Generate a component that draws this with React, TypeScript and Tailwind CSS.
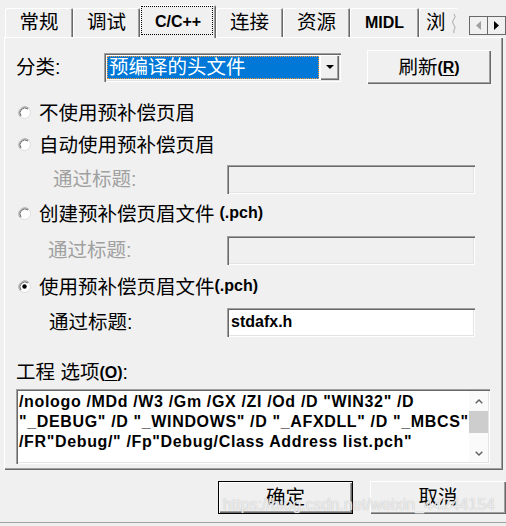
import React from "react"

const raised = "shadow-[inset_1px_1px_#ffffff,inset_-1px_-1px_#696969,inset_-2px_-2px_#a0a0a0]"
const sunken = "shadow-[inset_1px_1px_#a0a0a0,inset_2px_2px_#696969,inset_-1px_-1px_#ffffff,inset_-2px_-2px_#e3e3e3]"
const latin = "font-['Liberation_Sans',sans-serif] font-bold text-[16px]"

function Radio({ checked }: { checked?: boolean }) {
  return (
    <svg width="13" height="13" viewBox="0 0 13 13" className="ml-[2px] shrink-0">
      <circle cx="6.5" cy="6.5" r="6" fill="#ffffff" stroke="#dcdcdc" />
      <path d="M2.3 10.7 A6 6 0 0 1 10.7 2.3" fill="none" stroke="#a0a0a0" strokeWidth="1" />
      <path d="M3 10 A5 5 0 0 1 10 3" fill="none" stroke="#696969" strokeWidth="1" />
      {checked && <circle cx="6.5" cy="6.5" r="2.2" fill="#000000" />}
    </svg>
  )
}

function Tab({ className, children }: { className: string; children: React.ReactNode }) {
  return (
    <div
      className={`flex h-[29px] shrink-0 items-center justify-center rounded-t-[2px] bg-[#f0f0f0] shadow-[inset_1px_1px_#ffffff,inset_-1px_0_#696969,inset_-2px_0_#a0a0a0] ${className}`}
    >
      {children}
    </div>
  )
}

function FieldRow({ label, labelClass, disabled, value }: { label: string; labelClass: string; disabled?: boolean; value?: string }) {
  return (
    <div className="flex h-[30px] items-center">
      <div className={`w-[211px] pt-[2px] ${labelClass} ${disabled ? "text-[#a0a0a0]" : ""}`}>{label}</div>
      <div className={`flex h-[29px] w-[248px] items-center pl-[4px] ${sunken} ${disabled ? "bg-[#f0f0f0]" : "bg-white"}`}>
        {value && <span className={latin}>{value}</span>}
      </div>
    </div>
  )
}

export default function App() {
  return (
    <div className="relative h-[526px] w-[506px] overflow-hidden bg-[#f0f0f0] font-['Liberation_Sans','Noto_Sans_CJK_SC',sans-serif] text-[19.5px] leading-none text-black">
      {/* tab strip */}
      <div className="flex h-[37px] items-end pl-[5px]">
        <div className="flex w-[457px] items-end">
          <Tab className="w-[68px]">常规</Tab>
          <Tab className="w-[67px]">调试</Tab>
          <div className="relative z-10 -mb-px flex h-[33px] w-[76px] shrink-0 items-center justify-center rounded-t-[2px] bg-[#f0f0f0] shadow-[inset_1px_1px_#ffffff,inset_-1px_0_#696969,inset_-2px_0_#a0a0a0]">
            <span className={latin}>C/C++</span>
            <div className="absolute left-[1px] right-[3px] top-[1px] bottom-[3px] border border-dotted border-black" />
          </div>
          <Tab className="w-[67px]">连接</Tab>
          <Tab className="w-[67px]">资源</Tab>
          <Tab className="w-[69px]">
            <span className={latin}>MIDL</span>
          </Tab>
          <div className="flex h-[29px] w-[38px] shrink-0 items-center rounded-tl-[2px] pl-[7px] shadow-[inset_1px_1px_#ffffff]">
            浏
            <svg width="6" height="22" viewBox="0 0 6 22" className="ml-[6px]">
              <path d="M2 1 Q5 4 2 7 Q-1 10 2 13 Q5 16 2 19 L2 22" fill="none" stroke="#a0a0a0" strokeWidth="1" />
            </svg>
          </div>
        </div>
        <div className="mb-[2px] ml-[7px] flex h-[19px] border border-[#696969] bg-[#f0f0f0]">
          <div className="flex w-[18px] items-center justify-center border-r border-[#696969]">
            <svg width="5" height="9" viewBox="0 0 5 9">
              <path d="M5 0 L0 4.5 L5 9 Z" fill="#a0a0a0" />
            </svg>
          </div>
          <div className="flex w-[17px] items-center justify-center">
            <svg width="5" height="9" viewBox="0 0 5 9">
              <path d="M0 0 L5 4.5 L0 9 Z" fill="#000000" />
            </svg>
          </div>
        </div>
      </div>

      {/* page */}
      <div className={`ml-[4px] flex h-[433px] w-[499px] flex-col pl-[12px] pt-[13px] ${raised}`}>
        <div className="flex h-[34px] items-center">
          <div className="w-[88px] pt-[2px]">分类:</div>
          <div className={`flex h-[29px] w-[237px] bg-white p-[2px] ${sunken}`}>
            <div className="m-px flex flex-1 items-center bg-[#0078d7] pl-[2px] pt-[1px] text-white outline-1 outline-dotted outline-offset-[-1px] outline-[#ff9a3c]">
              预编译的头文件
            </div>
            <div className={`flex w-[19px] items-center justify-center bg-[#f0f0f0] ${raised}`}>
              <svg width="8" height="4" viewBox="0 0 8 4">
                <path d="M0 0 L8 0 L4 4 Z" fill="#000000" />
              </svg>
            </div>
          </div>
          <div className={`ml-[26px] flex h-[34px] w-[124px] items-center justify-center bg-[#f0f0f0] pt-[1px] ${raised}`}>
            刷新
            <span className={latin}>
              (<span className="underline underline-offset-2">R</span>)
            </span>
          </div>
        </div>

        <div className="mt-[13px] flex h-[30px] items-center">
          <Radio />
          <span className="ml-[8px] pt-[3px]">不使用预补偿页眉</span>
        </div>
        <div className="mt-[2px] flex h-[30px] items-center">
          <Radio />
          <span className="ml-[8px] pt-[3px]">自动使用预补偿页眉</span>
        </div>
        <div className="mt-[5px]">
          <FieldRow label="通过标题:" labelClass="pl-[37px]" disabled />
        </div>
        <div className="mt-[4px] flex h-[30px] items-center">
          <Radio />
          <span className="ml-[8px] pt-[3px]">创建预补偿页眉文件</span>
          <span className={`ml-[5px] ${latin}`}>(.pch)</span>
        </div>
        <div className="mt-[7px]">
          <FieldRow label="通过标题:" labelClass="pl-[32px]" disabled />
        </div>
        <div className="mt-[6px] flex h-[30px] items-center">
          <Radio checked />
          <span className="ml-[8px] pt-[3px]">使用预补偿页眉文件</span>
          <span className={latin}>(.pch)</span>
        </div>
        <div className="mt-[6px]">
          <FieldRow label="通过标题:" labelClass="pl-[33px]" value="stdafx.h" />
        </div>

        <div className="mt-[20px] flex h-[30px] items-center pt-[2px]">
          工程 选项
          <span className={latin}>
            (<span className="underline underline-offset-2">O</span>)
          </span>
          :
        </div>
        <div className={`mt-[2px] flex h-[75px] w-[474px] bg-white p-[2px] ${sunken}`}>
          <div className={`flex-1 pt-px pl-px leading-[20px] tracking-[0.65px] ${latin}`}>
            <div>/nologo /MDd /W3 /Gm /GX /ZI /Od /D "WIN32" /D</div>
            <div>"_DEBUG" /D "_WINDOWS" /D "_AFXDLL" /D "_MBCS"</div>
            <div>/FR"Debug/" /Fp"Debug/Class Address list.pch"</div>
          </div>
          <div className="flex w-[19px] flex-col bg-[#fafafa]">
            <div className="flex h-[20px] items-center justify-center">
              <svg width="8" height="5" viewBox="0 0 8 5">
                <path d="M0.7 4.3 L4 1 L7.3 4.3" fill="none" stroke="#606060" strokeWidth="1.4" />
              </svg>
            </div>
            <div className="h-[22px] bg-[#cdcdcd]" />
            <div className="flex-1" />
            <div className="flex h-[18px] items-center justify-center">
              <svg width="8" height="5" viewBox="0 0 8 5">
                <path d="M0.7 0.7 L4 4 L7.3 0.7" fill="none" stroke="#606060" strokeWidth="1.4" />
              </svg>
            </div>
          </div>
        </div>
      </div>

      {/* dialog buttons */}
      <div className="mt-[11px] flex gap-[17px] pl-[218px]">
        <div className="flex h-[33px] w-[135px] items-center justify-center border border-black">
          <div className={`flex h-full w-full items-center justify-center bg-[#f0f0f0] pt-[1px] ${raised}`}>确定</div>
        </div>
        <div className={`flex h-[33px] w-[136px] items-center justify-center bg-[#f0f0f0] pt-[1px] ${raised}`}>取消</div>
      </div>
      <div className="mt-[8px] h-px bg-[#a0a0a0]" />

      {/* watermark */}
      <div className="absolute left-[223px] top-[497px] font-['Liberation_Sans',sans-serif] text-[16px] text-white/75 [text-shadow:0_0_1px_#a8a8a8]">
        https://blog.csdn.net/weixin_44244154
      </div>
    </div>
  )
}
